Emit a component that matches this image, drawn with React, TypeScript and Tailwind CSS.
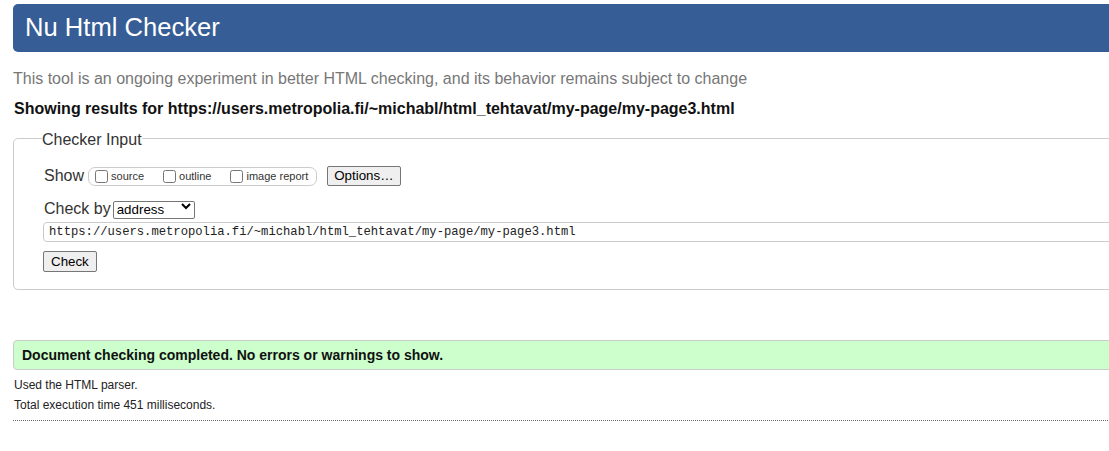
const url = 'https://users.metropolia.fi/~michabl/html_tehtavat/my-page/my-page3.html'

const Checkbox = ({ label }: { label: string }) => (
  <label className="flex items-center">
    <input type="checkbox" className="m-0 mr-[3px] h-[13px] w-[13px]" />
    <span className="text-[11px] leading-[13px]">{label}</span>
  </label>
)

export default function App() {
  return (
    <div className="min-h-[451px] w-full overflow-hidden bg-white font-['Liberation_Sans',Arial,sans-serif] text-[#222]">
      <div className="w-[1300px] pl-[13px] pt-[4px]">
        <h1 className="h-[48px] rounded-l-[5px] bg-[#365d95] pl-[12px] text-[25.6px] leading-[46px] text-white">
          Nu Html Checker
        </h1>

        <p className="mt-[18px] text-[16px] leading-[18px] text-[#777]">
          This tool is an ongoing experiment in better HTML checking, and its behavior remains subject to change
        </p>
        <p className="mt-[12px] pl-[1px] text-[16px] font-bold leading-[18px] text-[#111]">
          Showing results for {url}
        </p>

        <fieldset className="mt-[9px] rounded-[5px] border border-[#ccc] pb-[16px] pl-[28px] pt-[17px]">
          <legend className="p-0 pt-[4px] text-[16px] leading-[18px] text-[#333]">Checker Input</legend>

          <div className="flex h-[20px] items-center pl-[2px]">
            <span className="text-[16px] text-[#333]">Show</span>
            <div className="ml-[4px] flex h-[19px] items-center gap-[19px] rounded-[7px] border border-[#ccc] pl-[6px] pr-[8px] text-[#333]">
              <Checkbox label="source" />
              <Checkbox label="outline" />
              <Checkbox label="image report" />
            </div>
            <button className="ml-[10px] h-[20px] rounded-[2px] border border-[#767676] bg-[#efefef] px-[6px] text-[13.33px] leading-[18px] text-black">
              Options…
            </button>
          </div>

          <div className="mt-[14px] flex h-[18px] items-center pl-[2px]">
            <span className="text-[16px] text-[#333]">Check by</span>
            <div className="relative ml-[2px]">
              <select className="h-[18px] w-[82px] appearance-none rounded-[2px] border border-[#767676] bg-white pl-[3px] text-[13.33px] leading-[16px] text-black">
                <option>address</option>
              </select>
              <svg
                className="pointer-events-none absolute right-[4px] top-[5px] h-[8px] w-[10px]"
                viewBox="0 0 10 8"
                fill="none"
                stroke="#000"
                strokeWidth="2"
              >
                <path d="M1 2l4 4 4-4" />
              </svg>
            </div>
          </div>

          <div className="ml-[1px] mt-[4px] flex h-[20px] items-center rounded-[4px] border border-[#ccc] pl-[5px] font-['Liberation_Mono',monospace] text-[12.2px] text-[#222]">
            {url}
          </div>

          <button className="ml-[1px] mt-[9px] h-[21px] rounded-[2px] border border-[#767676] bg-[#efefef] px-[7px] text-[13.33px] leading-[19px] text-black">
            Check
          </button>
        </fieldset>

        <div className="mt-[50px] flex h-[30px] items-center rounded-[4px] border border-[#ccc] bg-[#ccffcc] pl-[8px] text-[14px] font-bold text-[#111]">
          Document checking completed. No errors or warnings to show.
        </div>

        <p className="mt-[5px] pl-[1px] text-[12px] leading-[20px] text-[#222]">Used the HTML parser.</p>
        <p className="pl-[1px] text-[12px] leading-[20px] text-[#222]">Total execution time 451 milliseconds.</p>

        <div className="mt-[5px] border-t border-dotted border-[#666]" />
      </div>
    </div>
  )
}
